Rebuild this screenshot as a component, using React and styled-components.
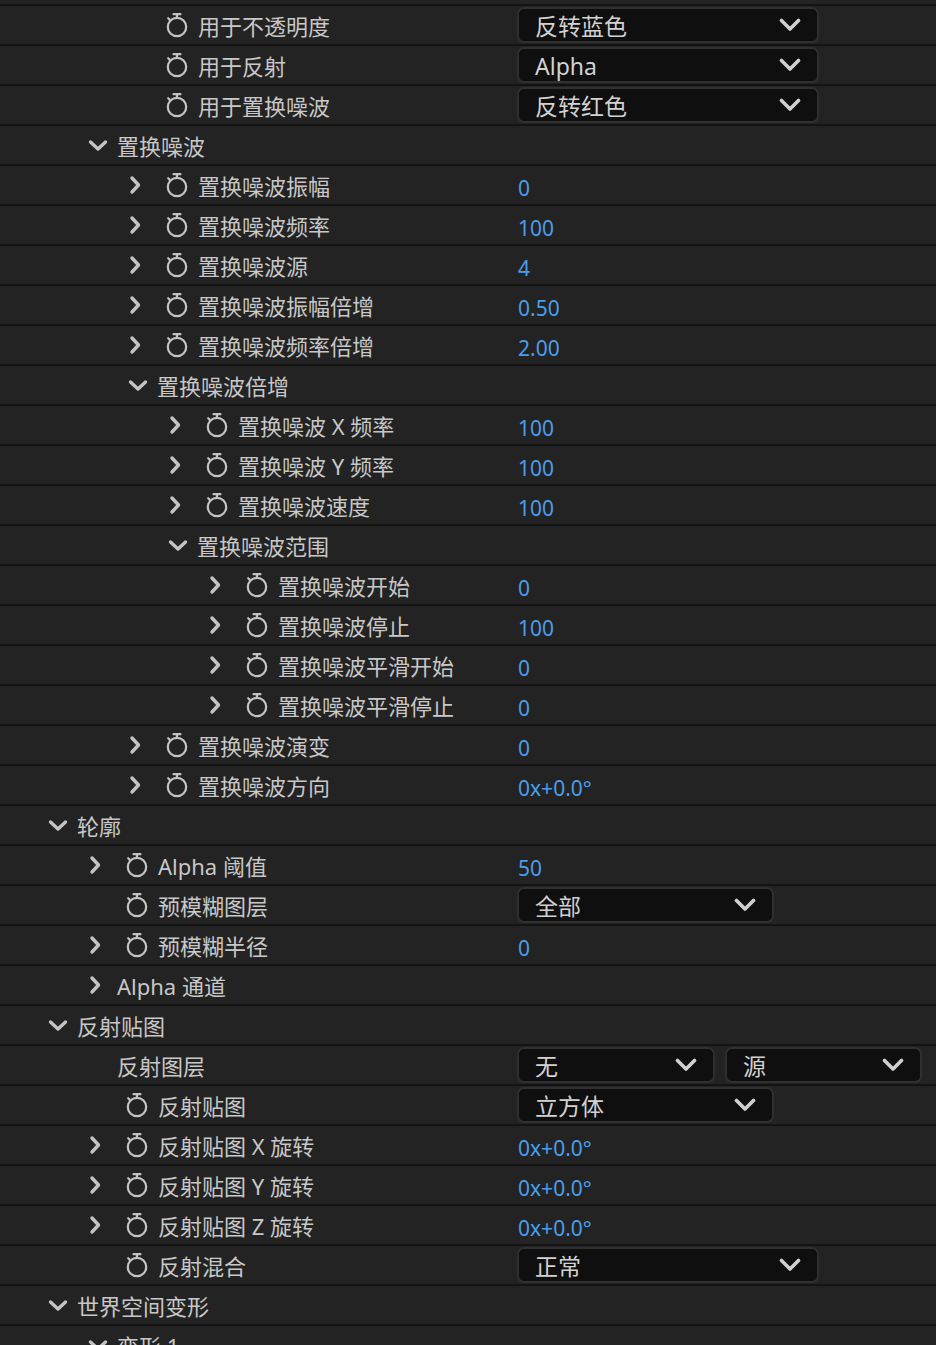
import styled, { createGlobalStyle } from "styled-components";

const GlobalStyle = createGlobalStyle`
  html, body {
    margin: 0;
    padding: 0;
    background: #232323;
  }
  body {
    font-family: "Noto Sans", "Noto Sans CJK SC", sans-serif;
    overflow: hidden;
  }
`;

const Panel = styled.div`
  width: 936px;
  height: 1345px;
  overflow: hidden;
  background: #232323;
`;

const TopEdge = styled.div`
  height: 4px;
  border-bottom: 2px solid #131313;
`;

const Row = styled.div`
  display: grid;
  grid-template-columns: 517px 1fr;
  height: 38px;
  border-bottom: 2px solid #131313;
  background: #232323;
`;

const LabelCell = styled.div`
  display: flex;
  align-items: center;
  padding-left: ${(p) => 48 + 40 * p.$depth}px;
  min-width: 0;
`;

const ArrowSlot = styled.div`
  width: 20px;
  height: 20px;
  flex: none;
  display: flex;
  align-items: center;
  justify-content: center;
`;

const StopwatchSlot = styled.div`
  width: 22px;
  flex: none;
  margin-left: 18px;
  display: flex;
  align-items: center;
  justify-content: center;
`;

const Label = styled.span`
  margin-left: ${(p) => (p.$afterIcon ? 10 : 9)}px;
  font-family: "Noto Sans", "Noto Sans CJK SC", sans-serif;
  font-size: 22px;
  color: #c8c8c8;
  white-space: nowrap;
  line-height: 1;
  padding-top: 2px;
`;

const ValueCell = styled.div`
  display: flex;
  align-items: center;
  gap: 10px;
`;

const NumValue = styled.span`
  margin-left: 1px;
  padding-top: 6px;
  font-family: "Noto Sans", sans-serif;
  font-size: 21px;
  color: #4a9eea;
  white-space: nowrap;
`;

const Select = styled.div`
  box-sizing: border-box;
  width: ${(p) => p.$w}px;
  height: 36px;
  display: flex;
  align-items: center;
  justify-content: space-between;
  padding: 0 16px 0 16px;
  background: #0f0f0f;
  border: 2px solid #303030;
  border-radius: 7px;
`;

const SelectText = styled.span`
  font-family: "Noto Sans", "Noto Sans CJK SC", sans-serif;
  font-size: 23px;
  color: #d2d2d2;
  line-height: 1;
  padding-top: 2px;
`;

const ChevronRight = () => (
  <svg width="20" height="20" viewBox="0 0 20 20">
    <polyline
      points="4,3 10.5,10 4,17"
      fill="none"
      stroke="#c4c4c4"
      strokeWidth="3.4"
      strokeLinecap="round"
      strokeLinejoin="round"
    />
  </svg>
);

const ChevronDown = () => (
  <svg width="20" height="20" viewBox="0 0 20 20">
    <polyline
      points="2.5,7 10,14 17.5,7"
      fill="none"
      stroke="#c4c4c4"
      strokeWidth="3.4"
      strokeLinecap="round"
      strokeLinejoin="round"
    />
  </svg>
);

const SelectChevron = () => (
  <svg width="22" height="14" viewBox="0 0 22 14">
    <polyline
      points="2.5,2.5 11,11 19.5,2.5"
      fill="none"
      stroke="#d0d0d0"
      strokeWidth="3.6"
      strokeLinecap="round"
      strokeLinejoin="round"
    />
  </svg>
);

// stopwatch: ring, stem + button on top, little nub at upper left
const Stopwatch = () => (
  <svg width="22" height="26" viewBox="0 0 22 26">
    <circle cx="11" cy="15" r="9.2" fill="none" stroke="#c4c4c4" strokeWidth="2.2" />
    <line x1="11" y1="3" x2="11" y2="6" stroke="#c4c4c4" strokeWidth="2.2" />
    <line x1="7.5" y1="2.2" x2="14.5" y2="2.2" stroke="#c4c4c4" strokeWidth="2.2" strokeLinecap="round" />
    <line x1="2.2" y1="6.2" x2="4.4" y2="8.4" stroke="#c4c4c4" strokeWidth="2.2" strokeLinecap="round" />
  </svg>
);

const rows = [
  { d: 2, label: "用于不透明度", sw: true, selects: [["反转蓝色", 302]] },
  { d: 2, label: "用于反射", sw: true, selects: [["Alpha", 302]] },
  { d: 2, label: "用于置换噪波", sw: true, selects: [["反转红色", 302]] },
  { d: 1, label: "置换噪波", group: true, open: true },
  { d: 2, label: "置换噪波振幅", sw: true, arrow: true, value: "0" },
  { d: 2, label: "置换噪波频率", sw: true, arrow: true, value: "100" },
  { d: 2, label: "置换噪波源", sw: true, arrow: true, value: "4" },
  { d: 2, label: "置换噪波振幅倍增", sw: true, arrow: true, value: "0.50" },
  { d: 2, label: "置换噪波频率倍增", sw: true, arrow: true, value: "2.00" },
  { d: 2, label: "置换噪波倍增", group: true, open: true },
  { d: 3, label: "置换噪波 X 频率", sw: true, arrow: true, value: "100" },
  { d: 3, label: "置换噪波 Y 频率", sw: true, arrow: true, value: "100" },
  { d: 3, label: "置换噪波速度", sw: true, arrow: true, value: "100" },
  { d: 3, label: "置换噪波范围", group: true, open: true },
  { d: 4, label: "置换噪波开始", sw: true, arrow: true, value: "0" },
  { d: 4, label: "置换噪波停止", sw: true, arrow: true, value: "100" },
  { d: 4, label: "置换噪波平滑开始", sw: true, arrow: true, value: "0" },
  { d: 4, label: "置换噪波平滑停止", sw: true, arrow: true, value: "0" },
  { d: 2, label: "置换噪波演变", sw: true, arrow: true, value: "0" },
  { d: 2, label: "置换噪波方向", sw: true, arrow: true, value: "0x+0.0°" },
  { d: 0, label: "轮廓", group: true, open: true },
  { d: 1, label: "Alpha 阈值", sw: true, arrow: true, value: "50" },
  { d: 1, label: "预模糊图层", sw: true, selects: [["全部", 257]] },
  { d: 1, label: "预模糊半径", sw: true, arrow: true, value: "0" },
  { d: 1, label: "Alpha 通道", group: true, open: false },
  { d: 0, label: "反射贴图", group: true, open: true },
  { d: 1, label: "反射图层", selects: [["无", 198], ["源", 197]] },
  { d: 1, label: "反射贴图", sw: true, selects: [["立方体", 257]] },
  { d: 1, label: "反射贴图 X 旋转", sw: true, arrow: true, value: "0x+0.0°" },
  { d: 1, label: "反射贴图 Y 旋转", sw: true, arrow: true, value: "0x+0.0°" },
  { d: 1, label: "反射贴图 Z 旋转", sw: true, arrow: true, value: "0x+0.0°" },
  { d: 1, label: "反射混合", sw: true, selects: [["正常", 302]] },
  { d: 0, label: "世界空间变形", group: true, open: true },
  { d: 1, label: "变形 1", group: true, open: true },
];

const PropertyRow = ({ row }) => {
  const { d, label, sw, group, open, arrow, value, selects } = row;
  let arrowIcon = null;
  if (group) arrowIcon = open ? <ChevronDown /> : <ChevronRight />;
  else if (arrow) arrowIcon = <ChevronRight />;

  return (
    <Row>
      <LabelCell $depth={d}>
        <ArrowSlot>{arrowIcon}</ArrowSlot>
        {sw && (
          <StopwatchSlot>
            <Stopwatch />
          </StopwatchSlot>
        )}
        <Label $afterIcon={sw}>{label}</Label>
      </LabelCell>
      <ValueCell>
        {value !== undefined && <NumValue>{value}</NumValue>}
        {selects &&
          selects.map(([text, w]) => (
            <Select key={text} $w={w}>
              <SelectText>{text}</SelectText>
              <SelectChevron />
            </Select>
          ))}
      </ValueCell>
    </Row>
  );
};

export default function App() {
  return (
    <Panel>
      <GlobalStyle />
      <TopEdge />
      {rows.map((row, i) => (
        <PropertyRow key={i} row={row} />
      ))}
    </Panel>
  );
}
